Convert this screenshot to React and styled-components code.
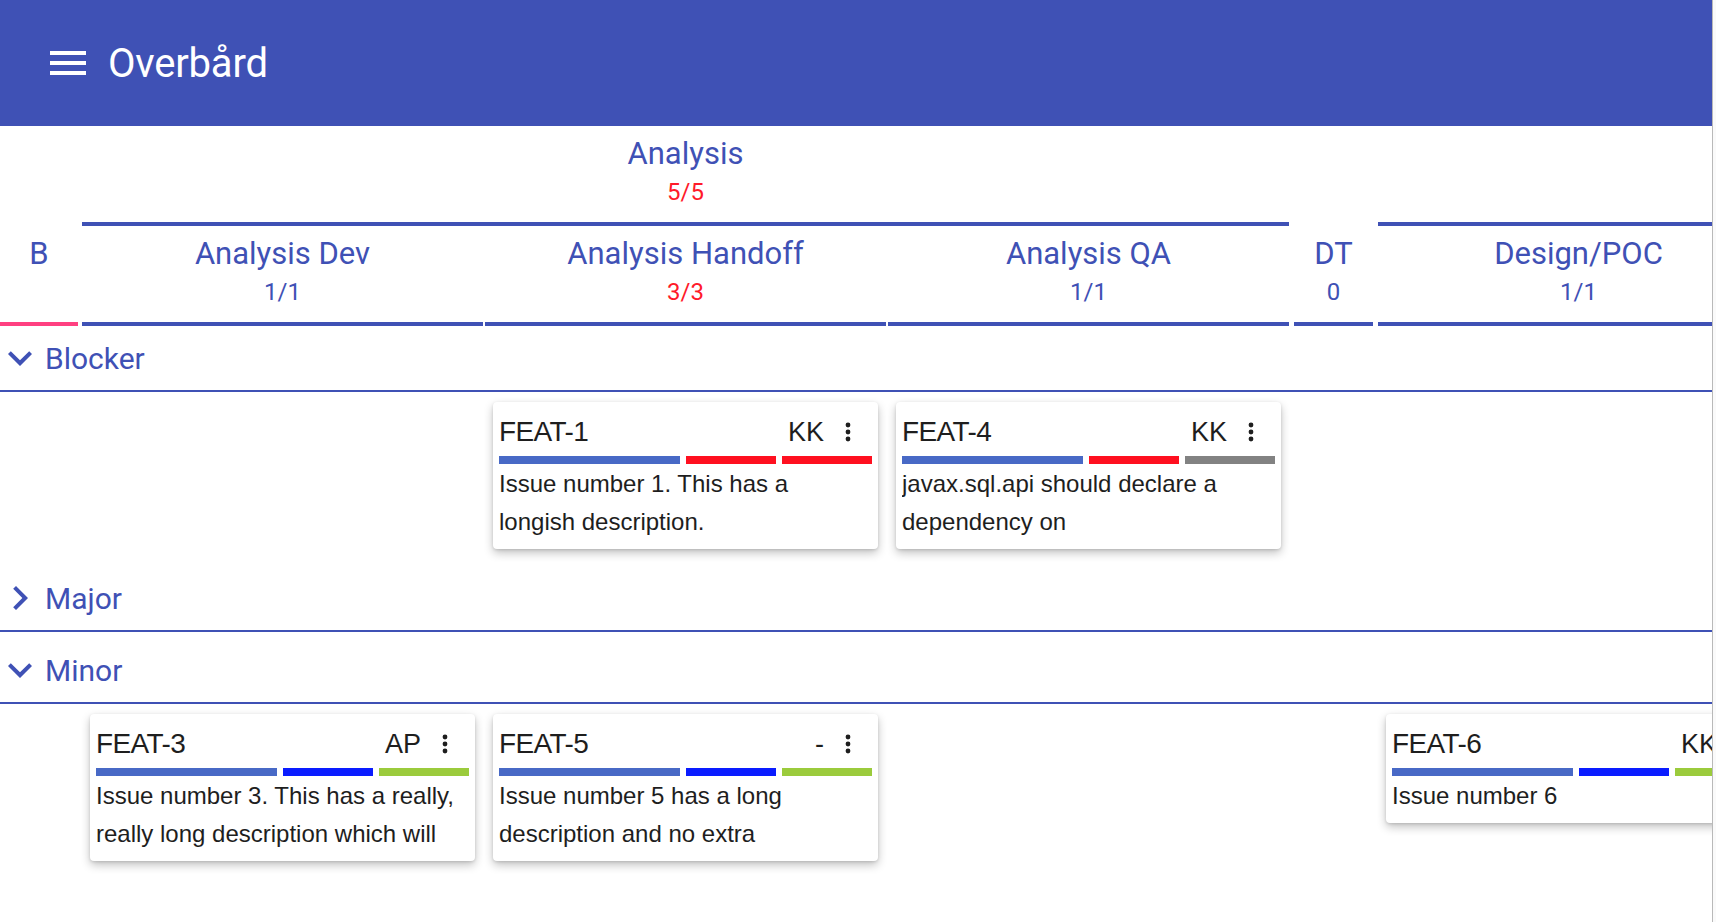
import styled, { createGlobalStyle } from "styled-components";

const INDIGO = "#3f51b5";
const RED = "#ff1a2a";
const PINK = "#ff4081";

const BAR_BLUE = "#4869c6";
const BAR_RED = "#ff1020";
const BAR_GRAY = "#828282";
const BAR_BRIGHT = "#0a1cff";
const BAR_GREEN = "#9bcb3c";

const GlobalStyle = createGlobalStyle`
  html, body {
    margin: 0;
    padding: 0;
    background: #fff;
  }
  body {
    font-family: Roboto, "Noto Sans", sans-serif;
  }
`;

const Frame = styled.div`
  display: flex;
  min-height: 100vh;
`;

const Main = styled.div`
  width: 1712px;
  flex: none;
  overflow: hidden;
`;

const ScrollEdge = styled.div`
  flex: 1;
  border-left: 1px solid #b9b9b9;
  background: #fafafa;
`;

const AppBar = styled.header`
  height: 126px;
  background: ${INDIGO};
  display: flex;
  align-items: center;
  padding-left: 44px;
  gap: 16px;
  color: #fff;
`;

const AppTitle = styled.h1`
  margin: 0;
  font-size: 40px;
  font-weight: 400;
  line-height: normal;
  letter-spacing: -0.2px;
`;

const Board = styled.div`
  width: max-content;
  min-width: 100%;
`;

const HeadRow = styled.div`
  display: flex;
  align-items: flex-end;
`;

const Group = styled.div`
  display: flex;
  flex-direction: column;
  margin-left: ${(p) => p.$gap || 0}px;
`;

const SubRow = styled.div`
  display: flex;
  gap: 2px;
`;

const Head = styled.div`
  width: ${(p) => (p.$w ? `${p.$w}px` : "auto")};
  margin-left: ${(p) => p.$gap || 0}px;
  padding: 9px 0 11px;
  border-bottom: 4px solid ${(p) => p.$line || INDIGO};
  text-align: center;
  color: ${INDIGO};
`;

const HeadTitle = styled.div`
  font-size: 31px;
  line-height: 38px;
  white-space: nowrap;
`;

const HeadCount = styled.div`
  font-size: 24px;
  line-height: 38px;
  color: ${(p) => (p.$full ? RED : INDIGO)};
`;

const LaneHead = styled.div`
  height: 64px;
  display: flex;
  align-items: center;
  gap: 13px;
  padding-left: 8px;
  border-bottom: 2px solid ${INDIGO};
  color: ${INDIGO};
  font-size: 30px;
`;

const LaneBody = styled.div`
  display: flex;
  min-height: 6px;
`;

const Cell = styled.div`
  box-sizing: border-box;
  width: ${(p) => p.$w}px;
  margin-left: ${(p) => p.$gap}px;
  padding: 10px 8px 17px;
  display: flex;
  flex-direction: column;
  gap: 12px;
`;

const Card = styled.div`
  background: #fff;
  border-radius: 4px;
  box-shadow: 0 4px 10px rgba(0, 0, 0, 0.24), 0 1px 3px rgba(0, 0, 0, 0.12);
  padding: 6px 6px 8px;
  color: #1e1e1e;
  font-family: "Liberation Sans", Arial, sans-serif;
`;

const CardTop = styled.div`
  display: flex;
  align-items: center;
  height: 48px;
`;

const CardId = styled.span`
  flex: 1;
  font-size: 28px;
  letter-spacing: -0.6px;
`;

const Assignee = styled.span`
  font-size: 27px;
`;

const MenuButton = styled.span`
  width: 48px;
  height: 48px;
  display: flex;
  align-items: center;
  justify-content: center;
`;

const Bars = styled.div`
  display: flex;
  gap: 6px;
`;

const Bar = styled.div`
  height: 8px;
  flex: ${(p) => p.$grow};
  background: ${(p) => p.$c};
`;

const Desc = styled.div`
  margin-top: 1px;
  padding-right: 8px;
  font-size: 24px;
  line-height: 38px;
  max-height: 76px;
  overflow: hidden;
`;

const MenuIcon = () => (
  <svg width="48" height="48" viewBox="0 0 24 24" fill="#fff">
    <path d="M3 18h18v-2H3v2zm0-5h18v-2H3v2zm0-7v2h18V6H3z" />
  </svg>
);

const Chevron = ({ open }) => (
  <svg width="24" height="24" viewBox="6 6 12 12" fill={INDIGO}>
    {open ? (
      <path d="M16.59 8.59L12 13.17 7.41 8.59 6 10l6 6 6-6z" />
    ) : (
      <path d="M10 6L8.59 7.41 13.17 12l-4.58 4.59L10 18l6-6z" />
    )}
  </svg>
);

const Kebab = () => (
  <svg width="24" height="24" viewBox="0 0 24 24" fill="#1e1e1e">
    <circle cx="12" cy="5" r="2.4" />
    <circle cx="12" cy="12" r="2.4" />
    <circle cx="12" cy="19" r="2.4" />
  </svg>
);

// header layout: plain states and groups of states
const layout = [
  { id: "b", title: "B", count: "\u00a0", w: 78, gap: 0, line: PINK },
  {
    group: "Analysis",
    count: "5/5",
    full: true,
    gap: 4,
    states: [
      { id: "dev", title: "Analysis Dev", count: "1/1", w: 401 },
      { id: "handoff", title: "Analysis Handoff", count: "3/3", full: true, w: 401 },
      { id: "qa", title: "Analysis QA", count: "1/1", w: 401 },
    ],
  },
  { id: "dt", title: "DT", count: "0", w: 79, gap: 5 },
  {
    group: "\u00a0",
    count: "\u00a0",
    gap: 5,
    states: [{ id: "design", title: "Design/POC", count: "1/1", w: 401 }],
  },
];

const cells = layout.flatMap((item) =>
  item.states
    ? item.states.map((s, i) => ({ id: s.id, w: s.w, gap: i === 0 ? item.gap : 2 }))
    : [{ id: item.id, w: item.w, gap: item.gap }]
);

const cards = {
  "FEAT-1": {
    assignee: "KK",
    bars: [BAR_BLUE, BAR_RED, BAR_RED],
    desc: "Issue number 1. This has a longish description.",
  },
  "FEAT-4": {
    assignee: "KK",
    bars: [BAR_BLUE, BAR_RED, BAR_GRAY],
    desc: "javax.sql.api should declare a dependency on",
  },
  "FEAT-3": {
    assignee: "AP",
    bars: [BAR_BLUE, BAR_BRIGHT, BAR_GREEN],
    desc: "Issue number 3. This has a really, really long description which will",
  },
  "FEAT-5": {
    assignee: "-",
    bars: [BAR_BLUE, BAR_BRIGHT, BAR_GREEN],
    desc: "Issue number 5 has a long description and no extra",
  },
  "FEAT-6": {
    assignee: "KK",
    bars: [BAR_BLUE, BAR_BRIGHT, BAR_GREEN],
    desc: "Issue number 6",
  },
};

const lanes = [
  { name: "Blocker", open: true, issues: { handoff: ["FEAT-1"], qa: ["FEAT-4"] } },
  { name: "Major", open: false, issues: {} },
  { name: "Minor", open: true, issues: { dev: ["FEAT-3"], handoff: ["FEAT-5"], design: ["FEAT-6"] } },
];

const IssueCard = ({ id }) => {
  const issue = cards[id];
  return (
    <Card>
      <CardTop>
        <CardId>{id}</CardId>
        <Assignee>{issue.assignee}</Assignee>
        <MenuButton>
          <Kebab />
        </MenuButton>
      </CardTop>
      <Bars>
        {issue.bars.map((c, i) => (
          <Bar key={i} $c={c} $grow={i === 0 ? 2 : 1} />
        ))}
      </Bars>
      <Desc>{issue.desc}</Desc>
    </Card>
  );
};

const StateHead = ({ state, gap }) => (
  <Head $w={state.w} $gap={gap} $line={state.line}>
    <HeadTitle>{state.title}</HeadTitle>
    <HeadCount $full={state.full}>{state.count}</HeadCount>
  </Head>
);

export default function App() {
  return (
    <>
      <GlobalStyle />
      <Frame>
        <Main>
          <AppBar>
            <MenuIcon />
            <AppTitle>Overbård</AppTitle>
          </AppBar>
          <Board>
            <HeadRow>
              {layout.map((item, i) =>
                item.states ? (
                  <Group key={i} $gap={item.gap}>
                    <Head>
                      <HeadTitle>{item.group}</HeadTitle>
                      <HeadCount $full={item.full}>{item.count}</HeadCount>
                    </Head>
                    <SubRow>
                      {item.states.map((s) => (
                        <StateHead key={s.id} state={s} />
                      ))}
                    </SubRow>
                  </Group>
                ) : (
                  <StateHead key={item.id} state={item} gap={item.gap} />
                )
              )}
            </HeadRow>
            {lanes.map((lane) => (
              <div key={lane.name}>
                <LaneHead>
                  <Chevron open={lane.open} />
                  {lane.name}
                </LaneHead>
                <LaneBody>
                  {lane.open &&
                    cells.map((c) => (
                      <Cell key={c.id} $w={c.w} $gap={c.gap}>
                        {(lane.issues[c.id] || []).map((id) => (
                          <IssueCard key={id} id={id} />
                        ))}
                      </Cell>
                    ))}
                </LaneBody>
              </div>
            ))}
          </Board>
        </Main>
        <ScrollEdge />
      </Frame>
    </>
  );
}
